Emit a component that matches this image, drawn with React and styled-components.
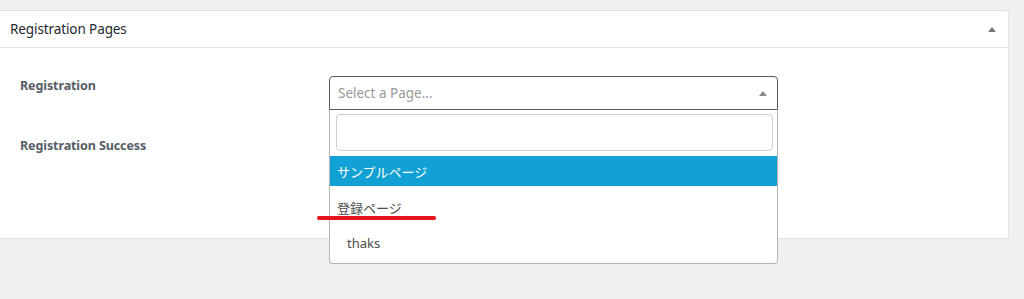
import styled, { createGlobalStyle } from 'styled-components';

const GlobalStyle = createGlobalStyle`
  html, body {
    margin: 0;
    padding: 0;
    background: #f0f0f1;
    font-family: "Noto Sans", "Noto Sans CJK JP", sans-serif;
    overflow: hidden;
  }
`;

const Page = styled.div`
  width: 1024px;
  height: 299px;
  padding-top: 10px;
  box-sizing: border-box;
`;

const Panel = styled.div`
  margin: 0 15px 0 -1px;
  background: #fff;
  border: 1px solid #e1e2e4;
  border-radius: 0 3px 0 0;
  box-sizing: border-box;
`;

const PanelHeader = styled.div`
  display: flex;
  align-items: center;
  justify-content: space-between;
  height: 36px;
  padding: 0 12px 0 10px;
  border-bottom: 1px solid #e1e2e4;
`;

const Title = styled.h2`
  margin: 0;
  font-size: 13.5px;
  font-weight: 400;
  color: #23282d;
  letter-spacing: -0.1px;
`;

const Triangle = styled.span`
  width: 0;
  height: 0;
  border-left: ${({ size }) => size}px solid transparent;
  border-right: ${({ size }) => size}px solid transparent;
  border-bottom: ${({ size }) => size + 1}px solid ${({ color }) => color};
`;

const PanelBody = styled.div`
  padding: 13px 0 55px;
`;

const Row = styled.div`
  display: grid;
  grid-template-columns: 309px 449px;
  padding: 15px 0 12px 20px;
`;

const Label = styled.div`
  font-size: 12.5px;
  font-weight: 700;
  color: #555d66;
  line-height: 18px;
  padding-top: ${({ offset }) => offset}px;
  letter-spacing: -0.1px;
`;

const Field = styled.div`
  position: relative;
  z-index: ${({ open }) => (open ? 2 : 1)};
`;

const SelectBox = styled.div`
  height: 34px;
  box-sizing: border-box;
  display: flex;
  align-items: center;
  justify-content: space-between;
  padding: 0 10px 0 8px;
  border: 1px solid ${({ open }) => (open ? '#5b5b5b' : '#c8c8c8')};
  border-radius: ${({ open }) => (open ? '4px 4px 0 0' : '4px')};
  background: #fff;
`;

const Placeholder = styled.span`
  font-size: 13.5px;
  color: #999;
`;

const Dropdown = styled.div`
  position: absolute;
  top: 100%;
  left: 0;
  right: 0;
  background: #fff;
  border: 1px solid #b4b4b4;
  border-top: none;
  border-radius: 0 0 4px 4px;
  padding-top: 4px;
  padding-bottom: 4px;
`;

const SearchInput = styled.div`
  height: 37px;
  box-sizing: border-box;
  margin: 0 4px 5px 6px;
  border: 1px solid #cfcfcf;
  border-radius: 4px;
`;

const Option = styled.div`
  height: ${({ h }) => h}px;
  box-sizing: border-box;
  display: flex;
  align-items: center;
  padding-left: ${({ indent }) => (indent ? 17 : 7)}px;
  padding-top: ${({ shift }) => shift || 0}px;
  font-size: 13px;
  color: ${({ active }) => (active ? '#fff' : '#4b4b4b')};
  background: ${({ active }) => (active ? '#12a1d4' : 'transparent')};
`;

/* hand-drawn annotation under the second option */
const Marker = styled.span`
  position: absolute;
  left: -13px;
  top: 106px;
  width: 119px;
  height: 4px;
  border-radius: 2px;
  background: #e3141d;
`;

export default function App() {
  return (
    <>
      <GlobalStyle />
      <Page>
        <Panel>
          <PanelHeader>
            <Title>Registration Pages</Title>
            <Triangle size={4} color="#72777c" />
          </PanelHeader>
          <PanelBody>
            <Row>
              <Label offset={1}>Registration</Label>
              <Field open>
                <SelectBox open>
                  <Placeholder>Select a Page...</Placeholder>
                  <Triangle size={4} color="#888" />
                </SelectBox>
                <Dropdown>
                  <SearchInput />
                  <Option h={30} active>サンプルページ</Option>
                  <Option h={40} shift={2}>登録ページ</Option>
                  <Option h={33} indent>thaks</Option>
                  <Marker />
                </Dropdown>
              </Field>
            </Row>
            <Row>
              <Label offset={0}>Registration Success</Label>
              <Field>
                <SelectBox>
                  <Placeholder>Select a Page...</Placeholder>
                </SelectBox>
              </Field>
            </Row>
          </PanelBody>
        </Panel>
      </Page>
    </>
  );
}
